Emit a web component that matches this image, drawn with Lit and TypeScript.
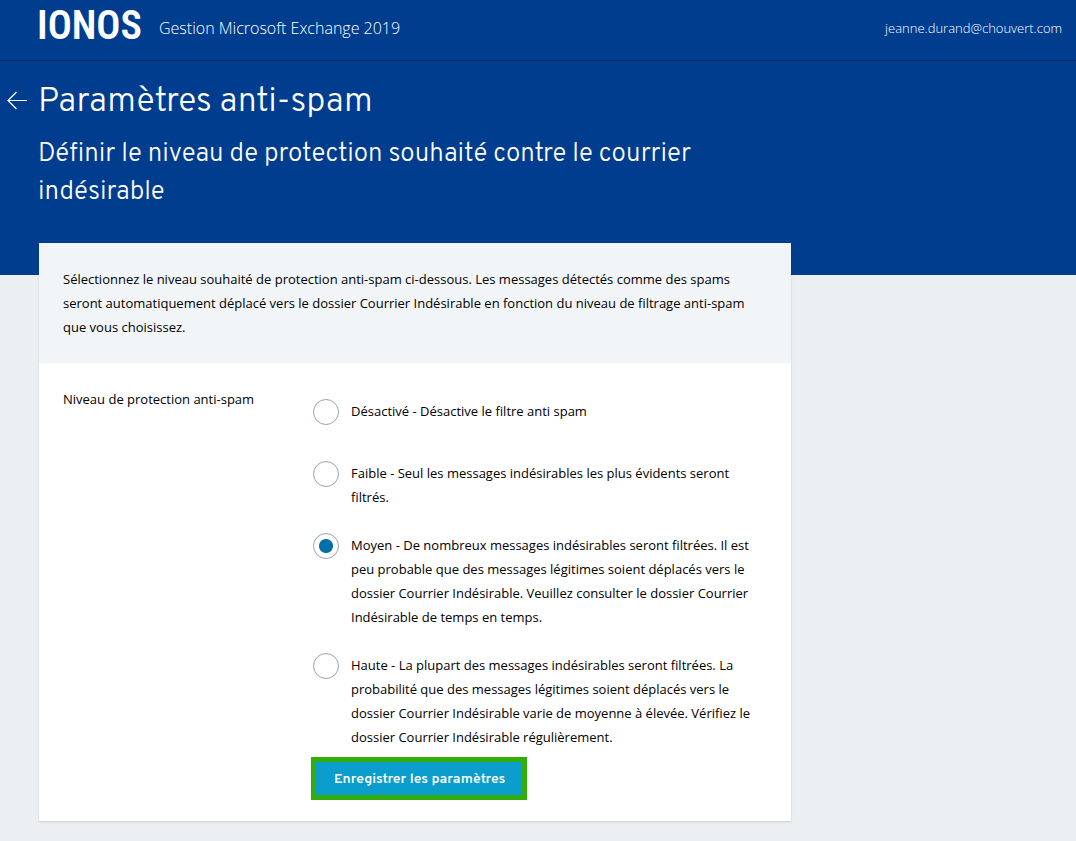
import { LitElement, html, css } from "lit";
import { customElement, state } from "lit/decorators.js";

interface Level {
  id: string;
  text: string;
}

const LEVELS: Level[] = [
  { id: "off", text: "Désactivé - Désactive le filtre anti spam" },
  { id: "low", text: "Faible - Seul les messages indésirables les plus évidents seront filtrés." },
  {
    id: "medium",
    text: "Moyen - De nombreux messages indésirables seront filtrées. Il est peu probable que des messages légitimes soient déplacés vers le dossier Courrier Indésirable. Veuillez consulter le dossier Courrier Indésirable de temps en temps.",
  },
  {
    id: "high",
    text: "Haute - La plupart des messages indésirables seront filtrées. La probabilité que des messages légitimes soient déplacés vers le dossier Courrier Indésirable varie de moyenne à élevée. Vérifiez le dossier Courrier Indésirable régulièrement.",
  },
];

@customElement("app-header")
class AppHeader extends LitElement {
  static styles = css`
    :host {
      display: block;
      font-family: "Open Sans", sans-serif;
      color: #fff;
    }
    .bar {
      display: flex;
      align-items: center;
      height: 60px;
      padding: 0 14px 0 37px;
      background: #003d8f;
      border-bottom: 1px solid #06265a;
    }
    .logo {
      min-width: 106px;
      margin: 0 16px 8px 0;
      font-family: "Roboto Condensed", "Roboto", sans-serif;
      font-size: 40px;
      font-weight: 600;
      line-height: 48px;
    }
    .product {
      flex: 1;
      margin-bottom: 4px;
      font-size: 16px;
      font-weight: 300;
      line-height: 24px;
    }
    .account {
      margin-bottom: 4px;
      color: inherit;
      font-size: 13px;
      font-weight: 300;
      line-height: 24px;
      text-decoration: none;
    }
  `;

  render() {
    return html`
      <header class="bar">
        <span class="logo">IONOS</span>
        <span class="product">Gestion Microsoft Exchange 2019</span>
        <a class="account" href="#">jeanne.durand@chouvert.com</a>
      </header>
    `;
  }
}

@customElement("spam-form")
class SpamForm extends LitElement {
  static styles = css`
    :host {
      display: block;
      font-family: "Open Sans", sans-serif;
      font-size: 13px;
      line-height: 24px;
      color: #000;
    }
    .card {
      background: #fff;
      box-shadow: 0 1px 2px rgba(0, 20, 50, 0.14);
    }
    .intro {
      margin: 0;
      padding: 24px;
      background: #f1f5f8;
    }
    .fields {
      display: grid;
      grid-template-columns: 248px 1fr;
      padding: 24px 24px 21px;
    }
    .options {
      display: grid;
      gap: 24px;
      padding: 12px 12px 8px 2px;
    }
    .option {
      display: flex;
      align-items: flex-start;
      gap: 12px;
      min-height: 38px;
    }
    .radio {
      appearance: none;
      flex: none;
      box-sizing: border-box;
      width: 26px;
      height: 26px;
      margin: 0;
      border: 1px solid #97a3b4;
      border-radius: 50%;
      background: #fff;
    }
    .radio:checked {
      background: radial-gradient(circle, #0070ad 0 6.5px, #fff 7.5px);
    }
    .save {
      grid-column: 2;
      justify-self: start;
      height: 43px;
      padding: 2px 17px 0 18px;
      border: 5px solid #31ae0c;
      background: #0b9dcc;
      color: #fff;
      font: 600 14px/20px "Overpass", "Roboto", sans-serif;
    }
  `;

  @state() private selected = "medium";

  render() {
    return html`
      <form class="card" @submit=${(e: Event) => e.preventDefault()}>
        <p class="intro">
          Sélectionnez le niveau souhaité de protection anti-spam ci-dessous. Les messages détectés
          comme des spams seront automatiquement déplacé vers le dossier Courrier Indésirable en
          fonction du niveau de filtrage anti-spam que vous choisissez.
        </p>
        <div class="fields">
          <span id="level-label">Niveau de protection anti-spam</span>
          <div class="options" role="radiogroup" aria-labelledby="level-label">
            ${LEVELS.map(
              (level) => html`
                <label class="option" for=${level.id}>
                  <input
                    class="radio"
                    type="radio"
                    name="level"
                    id=${level.id}
                    .checked=${this.selected === level.id}
                    @change=${() => (this.selected = level.id)}
                  />
                  <span>${level.text}</span>
                </label>
              `,
            )}
          </div>
          <button class="save" type="submit">Enregistrer les paramètres</button>
        </div>
      </form>
    `;
  }
}

@customElement("app-root")
class AppRoot extends LitElement {
  static styles = css`
    :host {
      display: block;
      min-height: 100vh;
      background: #ebeff2;
    }
    .hero {
      padding: 18px 39px 63px 7px;
      background: #003d8f;
      color: #fff;
      font-family: "Overpass", "Roboto", sans-serif;
      font-weight: 300;
    }
    .heading {
      display: flex;
      align-items: flex-start;
      gap: 11px;
    }
    .back {
      display: flex;
      padding-top: 11px;
      color: inherit;
    }
    .arrow {
      width: 20px;
      height: 20px;
      fill: none;
      stroke: currentColor;
      stroke-width: 1.2;
    }
    .title {
      margin: 0;
      font-size: 34px;
      font-weight: 300;
      line-height: 48px;
    }
    .subtitle {
      max-width: 720px;
      margin: 9px 0 0 31px;
      font-size: 26px;
      font-weight: 300;
      line-height: 38px;
    }
    .content {
      max-width: 752px;
      margin: -32px 39px 0;
      padding-bottom: 20px;
    }
  `;

  render() {
    return html`
      <app-header></app-header>
      <section class="hero">
        <div class="heading">
          <a class="back" href="#" aria-label="Retour">
            <svg class="arrow" viewBox="0 0 20 20" aria-hidden="true">
              <path d="M20 10.5H1M9.5 2L1 10.5L9.5 19" />
            </svg>
          </a>
          <h1 class="title">Paramètres anti-spam</h1>
        </div>
        <h2 class="subtitle">
          Définir le niveau de protection souhaité contre le courrier indésirable
        </h2>
      </section>
      <main class="content">
        <spam-form></spam-form>
      </main>
    `;
  }
}
